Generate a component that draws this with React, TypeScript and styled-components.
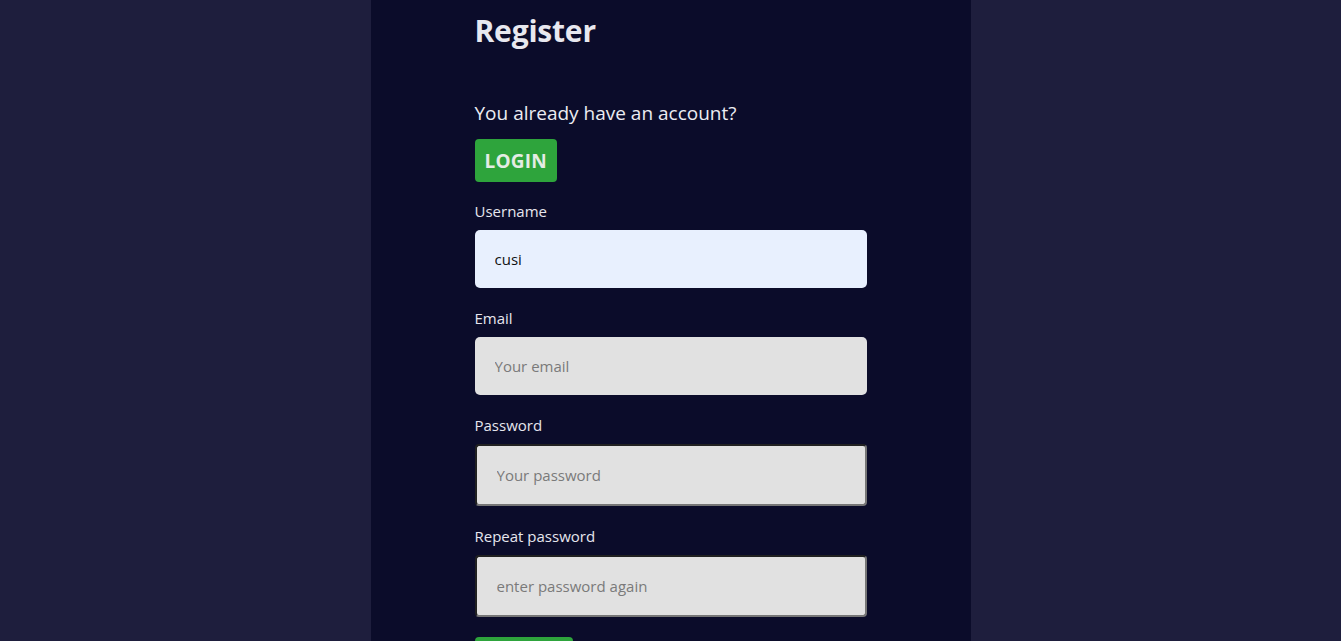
import styled, { createGlobalStyle, css } from "styled-components";

const GlobalStyle = createGlobalStyle`
  html, body {
    margin: 0;
    padding: 0;
    height: 100%;
    overflow: hidden;
    background: #1e1e3d;
  }

  body {
    font-family: "Open Sans", "Noto Sans", sans-serif;
    color: #e6e6ee;
  }
`;

const Page = styled.div`
  display: flex;
  justify-content: center;
  height: 641px;
`;

const Panel = styled.main`
  width: 600px;
  box-sizing: border-box;
  padding: 12px 104px 0;
  background: #0b0c2a;
  height: 100%;
  overflow: hidden;
`;

const Title = styled.h1`
  margin: 0 0 50px;
  font-size: 30px;
  line-height: 38px;
  font-weight: 700;
  letter-spacing: -0.2px;
  color: #e8e8ef;
`;

const Prompt = styled.p`
  margin: 0 0 13px;
  font-size: 19px;
  line-height: 26px;
  color: #ececf2;
`;

const Button = styled.button`
  display: block;
  align-self: flex-start;
  height: 43px;
  padding: 0 10px;
  border: none;
  border-radius: 4px;
  background: #2ea43c;
  color: #e4ece4;
  font-family: inherit;
  font-size: 19px;
  font-weight: 700;
  letter-spacing: 0.2px;
  cursor: pointer;
`;

const Form = styled.form`
  margin-top: 21px;
  display: flex;
  flex-direction: column;
`;

const Field = styled.div`
  display: flex;
  flex-direction: column;
  margin-bottom: 22px;

  &:last-of-type {
    margin-bottom: 20px;
  }
`;

const Label = styled.label`
  font-size: 15px;
  line-height: 16px;
  margin-bottom: 11px;
  color: #e6e6ee;
`;

const Input = styled.input<{ bordered?: boolean; filled?: boolean }>`
  box-sizing: border-box;
  width: 392px;
  height: 58px;
  padding: 0 20px;
  border: none;
  border-radius: 5px;
  background: ${({ filled }) => (filled ? "#e8f0fe" : "#e1e1e1")};
  color: #111;
  font-family: inherit;
  font-size: 15px;
  outline: none;

  &::placeholder {
    color: #7a7a7a;
  }

  ${({ bordered }) =>
    bordered &&
    css`
      height: 62px;
      border: 2px inset #767676;
      border-radius: 4px;
    `}
`;

const fields = [
  { label: "Username", type: "text", value: "cusi", placeholder: "Your username" },
  { label: "Email", type: "email", placeholder: "Your email" },
  { label: "Password", type: "password", placeholder: "Your password", bordered: true },
  { label: "Repeat password", type: "password", placeholder: "enter password again", bordered: true },
];

export default function App() {
  return (
    <>
      <GlobalStyle />
      <Page>
        <Panel>
          <Title>Register</Title>
          <Prompt>You already have an account?</Prompt>
          <Button type="button">LOGIN</Button>

          <Form onSubmit={(e) => e.preventDefault()}>
            {fields.map((f) => (
              <Field key={f.label}>
                <Label>{f.label}</Label>
                <Input
                  type={f.type}
                  defaultValue={f.value}
                  placeholder={f.placeholder}
                  filled={!!f.value}
                  bordered={f.bordered}
                />
              </Field>
            ))}
            <Button type="submit">SIGN UP</Button>
          </Form>
        </Panel>
      </Page>
    </>
  );
}
